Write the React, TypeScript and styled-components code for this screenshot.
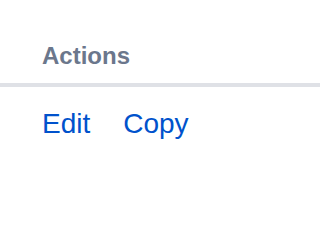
import React from "react";
import styled, { createGlobalStyle } from "styled-components";

const Global = createGlobalStyle`
  html, body { margin: 0; padding: 0; background: #ffffff; }
  body { font-family: "Liberation Sans", Arial, sans-serif; }
`;

const Table = styled.div`
  display: flex;
  flex-direction: column;
  width: 100%;
`;

const HeaderRow = styled.div`
  display: flex;
  padding: 40px 0 11px 42px;
  border-bottom: 4px solid #dfe1e6;
`;

const HeaderCell = styled.span`
  font-size: 24px;
  line-height: 32px;
  font-weight: 700;
  color: #6b778c;
`;

const BodyRow = styled.div`
  display: flex;
  gap: 33px;
  padding: 17px 0 0 42px;
`;

const ActionLink = styled.a`
  font-size: 28px;
  line-height: 40px;
  color: #0052cc;
  text-decoration: none;
  cursor: pointer;
`;

export default function App() {
  return (
    <>
      <Global />
      <Table>
        <HeaderRow>
          <HeaderCell>Actions</HeaderCell>
        </HeaderRow>
        <BodyRow>
          <ActionLink>Edit</ActionLink>
          <ActionLink>Copy</ActionLink>
        </BodyRow>
      </Table>
    </>
  );
}
